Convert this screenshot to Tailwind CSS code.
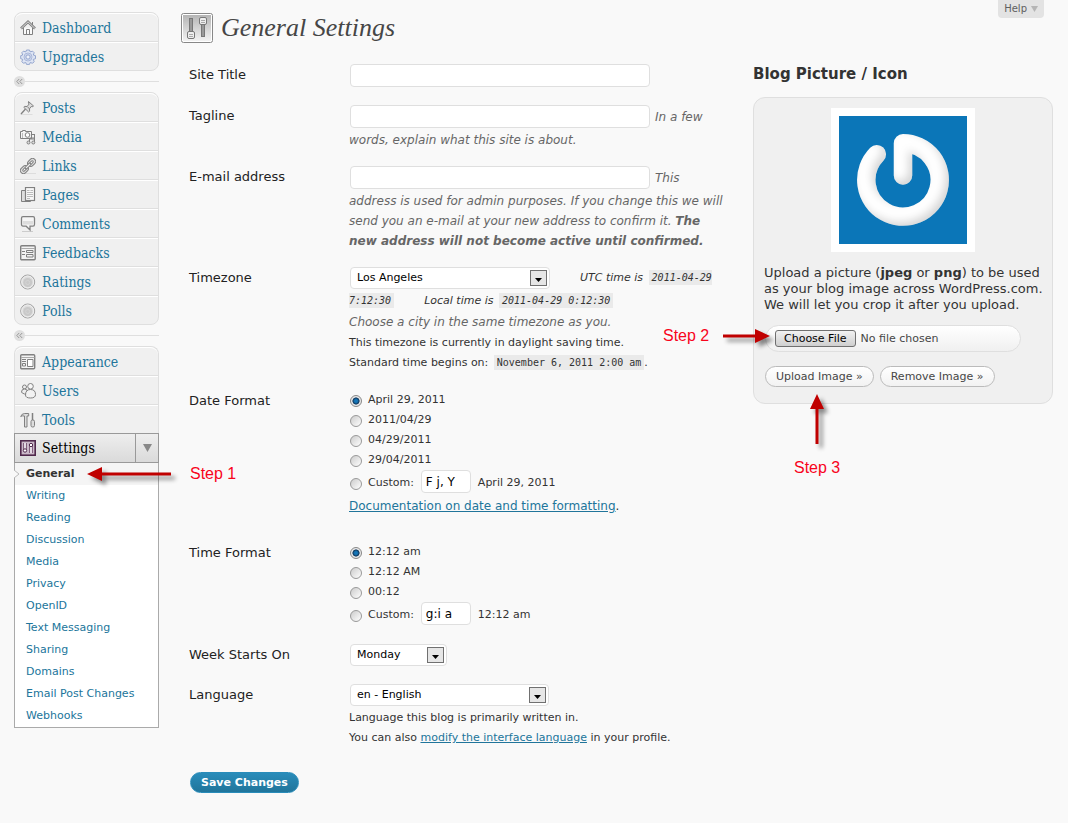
<!DOCTYPE html>
<html lang="en">

<head>
    <meta charset="UTF-8">
    <meta name="viewport" content="width=device-width, initial-scale=1.0">
    <title>General Settings</title>
    <script src="https://cdn.jsdelivr.net/npm/@tailwindcss/browser@4"></script>
</head>

<body class="flex min-h-screen items-start bg-[#f9f9f9] pl-[14px] pr-[15px] font-['DejaVu_Sans',sans-serif] text-[12px] leading-5 text-[#333]">

    <!-- Sidebar -->
    <nav class="w-[145px] shrink-0 pt-3 font-['DejaVu_Serif_Condensed','DejaVu_Serif',serif] text-[14px] text-[#21759b]">
        <ul class="rounded-lg border border-[#dfdfdf] bg-[#f0f0f0]">
            <li class="h-[29px] rounded-t-lg border-t border-b border-t-white border-b-[#dfdfdf]">
                <a href="#" class="flex h-full items-center gap-[6px] pl-[5px]">
                    <svg class="size-4" viewBox="0 0 16 16" fill="none" stroke="#808080"><path d="M3.500 8v6.500h9V8" fill="#fafafa"/><path d="M12.500 2v3"/><path d="M1 8.500L8 1.800l7 6.700" stroke-width="2.600"/><path d="M1.200 8.300L8 1.800l6.800 6.500" stroke="#e4e4e4" stroke-width=".9"/><path d="M6.500 14.500v-5h3v5"/></svg>
                    Dashboard</a>
            </li>
            <li class="h-[28px] border-t border-t-white">
                <a href="#" class="flex h-full items-center gap-[6px] pl-[5px]">
                    <svg class="size-4" viewBox="0 0 16 16" fill="none" stroke="#8c9fcb"><path d="M6.500 1h3l.6 1.800 2.600-.6 1.500 1.500-.9 2.300 2.200.7v3l-2.200.7.9 2.300-1.500 1.500-2.600-.6-.6 1.800h-3l-.6-1.800-2.600.6-1.500-1.500.9-2.300L.7 9.700v-3L2.700 6l-.9-2.300 1.500-1.500 2.600.6z" fill="#dde4f3" stroke-width=".9"/><circle cx="8" cy="8" r="4" stroke="#a9b7da"/><rect x="6" y="6" width="4" height="4" rx="1" fill="#eef1f9"/></svg>
                    Upgrades</a>
            </li>
        </ul>

        <div class="flex h-[21px] items-center">
            <svg class="size-[11px]" viewBox="0 0 11 11" fill="none"><circle cx="5.500" cy="5.500" r="5.500" fill="#dfdfdf"/><path d="M5.200 3L2.800 5.500 5.200 8M8.200 3L5.800 5.500 8.200 8" stroke="#999"/></svg>
            <span class="h-px flex-1 bg-[#dfdfdf]"></span>
        </div>

        <ul class="rounded-lg border border-[#dfdfdf] bg-[#f0f0f0]">
            <li class="h-[29px] rounded-t-lg border-t border-b border-t-white border-b-[#dfdfdf]">
                <a href="#" class="flex h-full items-center gap-[6px] pl-[5px]">
                    <svg class="size-4" viewBox="0 0 16 16" fill="none" stroke="#808080"><path d="M.5 14.500h12" stroke="#ddd"/><path d="M1 14l4.500-5" stroke-width="1.300"/><path d="M8.500 1.500l5 4.500-1.300.8-1-.3-1.700 2.300.1 2.400-1 .8-4.800-4.700.8-.9 2.500.1L9.200 4l-.8-1z" fill="#dcdcdc"/><path d="M7.500 7l2 1.700"/></svg>
                    Posts</a>
            </li>
            <li class="h-[29px] border-t border-b border-t-white border-b-[#dfdfdf]">
                <a href="#" class="flex h-full items-center gap-[6px] pl-[5px]">
                    <svg class="size-4" viewBox="0 0 16 16" fill="none" stroke="#808080"><path d="M.5 2.500h2v-1h3v1h6v7H.5z" fill="#f4f4f4"/><circle cx="7.500" cy="6" r="2.300" fill="#fff"/><path d="M2.500 4v5" stroke="#bbb"/><path d="M9.500 13.500V9h5v-3.500M14.500 5v8.500M12 5.500h2.500M9.500 10h5"/><circle cx="8.500" cy="13.500" r="1.500" fill="#ddd"/><circle cx="13.300" cy="13.500" r="1.500" fill="#ddd"/></svg>
                    Media</a>
            </li>
            <li class="h-[29px] border-t border-b border-t-white border-b-[#dfdfdf]">
                <a href="#" class="flex h-full items-center gap-[6px] pl-[5px]">
                    <svg class="size-4" viewBox="0 0 16 16" fill="none" stroke="#808080"><path d="M5 15.500h11" stroke="#ddd"/><g transform="rotate(-45 8 8)"><rect x="-1.500" y="4.900" width="8.700" height="6.200" rx="3.100" fill="#ddd"/><rect x="1" y="7" width="4" height="2" rx="1" fill="#fff"/><rect x="8.800" y="4.900" width="8.700" height="6.200" rx="3.100" fill="#ddd"/><rect x="11" y="7" width="4" height="2" rx="1" fill="#fff"/><rect x="4.500" y="6.900" width="7" height="2.200" rx="1" fill="#eee"/></g></svg>
                    Links</a>
            </li>
            <li class="h-[29px] border-t border-b border-t-white border-b-[#dfdfdf]">
                <a href="#" class="flex h-full items-center gap-[6px] pl-[5px]">
                    <svg class="size-4" viewBox="0 0 16 16" fill="none" stroke="#808080"><path d="M5 3.500H1.500v11h9V13" fill="#ddd"/><rect x="5.500" y=".5" width="9" height="13" fill="#f8f8f8" stroke-width="1.200"/><path d="M7 3.500h2.500M10.500 3.500h2.500M7 5.500h6M7 7.500h6M7 9.500h6M7 11.500h3" stroke="#bbb"/></svg>
                    Pages</a>
            </li>
            <li class="h-[29px] border-t border-b border-t-white border-b-[#dfdfdf]">
                <a href="#" class="flex h-full items-center gap-[6px] pl-[5px]">
                    <svg class="size-4" viewBox="0 0 16 16" fill="none" stroke="#808080"><path d="M2 15.500h11" stroke="#ccc"/><path d="M3 .7h10q1.500 0 1.500 1.500v6q0 2-1.500 2h-3L10 14l-3.800-3.800H3q-1.500 0-1.500-2v-6Q1.500.7 3 .7z" fill="#f6f6f6" stroke-width="1.300"/><path d="M3 5h10v3.500H3z" fill="#ddd" stroke="none"/></svg>
                    Comments</a>
            </li>
            <li class="h-[29px] border-t border-b border-t-white border-b-[#dfdfdf]">
                <a href="#" class="flex h-full items-center gap-[6px] pl-[5px]">
                    <svg class="size-4" viewBox="0 0 16 16" fill="none" stroke="#808080"><rect x=".7" y=".7" width="14.500" height="14" rx="1" fill="#f3f3f3" stroke-width="1.400"/><path d="M1 3.500h14" stroke="#aaa"/><path d="M2 6.500h3M2 9.500h3M6.500 5.500h6.500v2H6.500zM6.500 9.500h6.500v2.500H6.500z"/></svg>
                    Feedbacks</a>
            </li>
            <li class="h-[29px] border-t border-b border-t-white border-b-[#dfdfdf]">
                <a href="#" class="flex h-full items-center gap-[6px] pl-[5px]">
                    <svg class="size-4" viewBox="0 0 16 16" fill="none"><circle cx="7.700" cy="8" r="7" fill="#ddd" stroke="#a0a0a0"/><circle cx="7.700" cy="8" r="6" stroke="#eee"/><circle cx="7.700" cy="8.500" r="4.500" fill="#c9c9c9"/><circle cx="7.700" cy="8.500" r="2" stroke="#d4d4d4"/></svg>
                    Ratings</a>
            </li>
            <li class="h-[28px] border-t border-t-white">
                <a href="#" class="flex h-full items-center gap-[6px] pl-[5px]">
                    <svg class="size-4" viewBox="0 0 16 16" fill="none"><circle cx="7.700" cy="8" r="7" fill="#ddd" stroke="#a0a0a0"/><circle cx="7.700" cy="8" r="6" stroke="#eee"/><circle cx="7.700" cy="8.500" r="4.500" fill="#c9c9c9"/><circle cx="7.700" cy="8.500" r="2" stroke="#d4d4d4"/></svg>
                    Polls</a>
            </li>
        </ul>

        <div class="flex h-[21px] items-center">
            <svg class="size-[11px]" viewBox="0 0 11 11" fill="none"><circle cx="5.500" cy="5.500" r="5.500" fill="#dfdfdf"/><path d="M5.200 3L2.800 5.500 5.200 8M8.200 3L5.800 5.500 8.200 8" stroke="#999"/></svg>
            <span class="h-px flex-1 bg-[#dfdfdf]"></span>
        </div>

        <ul class="rounded-t-lg border border-b-0 border-[#dfdfdf] bg-[#f0f0f0]">
            <li class="h-[29px] rounded-t-lg border-t border-b border-t-white border-b-[#dfdfdf]">
                <a href="#" class="flex h-full items-center gap-[6px] pl-[5px]">
                    <svg class="size-4" viewBox="0 0 16 16" fill="none" stroke="#808080"><rect x=".7" y=".7" width="14" height="14" rx="1" fill="#f3f3f3" stroke-width="1.400"/><path d="M1 3.500h13.500" stroke="#aaa"/><path d="M2 5.500h4M2 7.500h4M2.500 9.500h3v2.500h-3z"/><path d="M7.500 5.500h5.500v7H7.500z" fill="#fff"/></svg>
                    Appearance</a>
            </li>
            <li class="h-[29px] border-t border-b border-t-white border-b-[#dfdfdf]">
                <a href="#" class="flex h-full items-center gap-[6px] pl-[5px]">
                    <svg class="size-4" viewBox="0 0 16 16" fill="none" stroke="#808080"><circle cx="4.500" cy="4" r="2" fill="#eee"/><path d="M1.500 9q0-3 3-3t3 3-3 2-3-2z" fill="#eee"/><circle cx="10.500" cy="3.300" r="2.800" fill="#f6f6f6"/><path d="M5.500 12q0-5.500 5-5.500t5 5q0 3.500-5 3.500t-5-3z" fill="#f2f2f2"/></svg>
                    Users</a>
            </li>
            <li class="h-[28px] border-t border-t-white">
                <a href="#" class="flex h-full items-center gap-[6px] pl-[5px]">
                    <svg class="size-4" viewBox="0 0 16 16" fill="none" stroke="#808080"><path d="M.7 4.500q1-3 4-3h4v2.500H7v11H4.500V4Q2 3.500.7 4.500z" fill="#ddd"/><path d="M12.500 1v7" stroke-width="1.500"/><rect x="11" y="8" width="3.500" height="7" rx="1.500" fill="#ddd"/></svg>
                    Tools</a>
            </li>
        </ul>
        <div class="flex h-[30px] border border-[#999] bg-linear-to-b from-[#eee] to-[#dadada] text-black">
            <a href="#" class="flex flex-1 items-center gap-[6px] pl-[5px]">
                <svg class="size-4" viewBox="0 0 16 16" fill="none"><rect x=".8" y=".8" width="14.400" height="14.400" fill="#cbb9c9" stroke="#50284c" stroke-width="1.600"/><path d="M3.500 3v7M6.500 3v7M9.500 6v7M12.500 6v7" stroke="#6d4869" stroke-width=".8"/><path d="M5 3v7M11 6v7" stroke="#f4eef3" stroke-width="1.200"/><circle cx="5" cy="10.500" r="1.700" fill="#fff" stroke="#50284c"/><circle cx="11" cy="5" r="1.700" fill="#fff" stroke="#50284c"/></svg>
                Settings</a>
            <button type="button" aria-label="Toggle settings menu" class="flex w-[23px] items-center justify-center border-l border-[#999]">
                <svg class="h-2 w-[9px]" viewBox="0 0 9 8" fill="#888"><path d="M0 0h9L4.500 8z"/></svg>
            </button>
        </div>
        <ul class="border border-t-0 border-[#aaa] bg-white font-['DejaVu_Sans',sans-serif] text-[11px] leading-[22px]">
            <li class="relative bg-[#f5f5f5] pl-[11px] font-bold text-[#333]"><a href="#">General</a>
                <svg class="absolute top-[6px] -left-px h-[10px] w-[6px]" viewBox="0 0 6 10" fill="#f9f9f9"><path d="M0 1l5 4-5 4" stroke="#bbb"/></svg>
                <div class="absolute top-0 left-[72px] flex items-center gap-[13px] whitespace-nowrap font-['Liberation_Sans',sans-serif] text-[16px] font-normal text-[#f8041c]">
                    <svg class="h-[18px] w-[90px] overflow-visible drop-shadow-[4px_4px_2px_rgb(0_0_0/0.45)]" viewBox="0 0 90 18" fill="#c00000"><path d="M0 9L15 2v5.500h69v3H15V16z"/></svg>
                    Step 1
                </div>
            </li>
            <li class="pl-[11px]"><a href="#">Writing</a></li>
            <li class="pl-[11px]"><a href="#">Reading</a></li>
            <li class="pl-[11px]"><a href="#">Discussion</a></li>
            <li class="pl-[11px]"><a href="#">Media</a></li>
            <li class="pl-[11px]"><a href="#">Privacy</a></li>
            <li class="pl-[11px]"><a href="#">OpenID</a></li>
            <li class="pl-[11px]"><a href="#">Text Messaging</a></li>
            <li class="pl-[11px]"><a href="#">Sharing</a></li>
            <li class="pl-[11px]"><a href="#">Domains</a></li>
            <li class="pl-[11px]"><a href="#">Email Post Changes</a></li>
            <li class="pl-[11px]"><a href="#">Webhooks</a></li>
        </ul>
    </nav>

    <main class="ml-[22px] min-w-0 flex-1">
        <header class="flex items-start justify-between">
            <div class="flex items-center gap-2 pt-3">
                <svg class="h-8 w-8" viewBox="0 0 32 32" fill="none">
                    <defs><linearGradient id="tile" x1="0" y1="0" x2="0" y2="1"><stop offset="0" stop-color="#b5b5b5"/><stop offset="1" stop-color="#f2f2f2"/></linearGradient></defs>
                    <rect x=".5" y="1.500" width="31" height="29" rx="2" fill="#fff" stroke="#888"/><rect x="2" y="3" width="28" height="26" fill="url(#tile)"/>
                    <rect x="8.500" y="6.500" width="3" height="14" fill="#999" stroke="#777"/>
                    <rect x="20.500" y="11.500" width="3" height="13" fill="#999" stroke="#777"/>
                    <rect x="6.500" y="19.500" width="7" height="7" rx="1.500" fill="#eee" stroke="#777"/>
                    <rect x="18.500" y="5.500" width="7" height="7" rx="1.500" fill="#eee" stroke="#777"/>
                    <path d="M8 22.500h4M8 24.500h4M20 8.500h4M20 10.500h4" stroke="#aaa"/>
                </svg>
                <h1 class="font-['Liberation_Serif',serif] text-[26px] leading-8 text-[#464646] italic">General Settings</h1>
            </div>
            <button type="button" class="mr-[9px] flex h-[18px] items-center gap-1 rounded-b-sm bg-[#e3e3e3] px-[6px] text-[10px] text-[#606060]">Help
                <svg class="h-[6px] w-[7px]" viewBox="0 0 7 6" fill="#b5b5b5"><path d="M0 0h7L3.500 6z"/></svg>
            </button>
        </header>

        <div class="flex items-start gap-6 pt-5 pl-2">
            <form class="min-w-0 flex-1">
                <div class="flex flex-col gap-4">
                    <div class="grid grid-cols-[160px_1fr]">
                        <label for="site-title" class="pt-px text-[13px] text-[#222]">Site Title</label>
                        <div class="flex h-[25px] items-start">
                            <input id="site-title" type="text" class="ml-px h-[23px] w-[300px] rounded border border-[#dfdfdf] bg-white px-1">
                        </div>
                    </div>

                    <div class="grid grid-cols-[160px_1fr] text-[#666]">
                        <label for="tagline" class="pt-px text-[13px] text-[#222]">Tagline</label>
                        <div class="italic">
                            <div class="mb-[2px] flex h-[23px] items-center gap-[5px]">
                                <input id="tagline" type="text" class="ml-px h-[23px] w-[300px] rounded border border-[#dfdfdf] bg-white px-1">
                                <span class="whitespace-nowrap">In a few</span>
                            </div>
                            <p>words, explain what this site is about.</p>
                        </div>
                    </div>

                    <div class="grid grid-cols-[160px_1fr] text-[#666]">
                        <label for="email" class="pt-px text-[13px] text-[#222]">E-mail address</label>
                        <div class="italic">
                            <div class="mb-[2px] flex h-[23px] items-center gap-[5px]">
                                <input id="email" type="email" class="ml-px h-[23px] w-[300px] rounded border border-[#dfdfdf] bg-white px-1">
                                <span class="whitespace-nowrap">This</span>
                            </div>
                            <p class="whitespace-nowrap">address is used for admin purposes. If you change this we will<br>send you an e-mail at your new address to confirm it. <b>The<br>new address will not become active until confirmed.</b></p>
                        </div>
                    </div>

                    <div class="grid grid-cols-[160px_1fr] pb-px text-[11px]">
                        <label for="timezone" class="pt-px text-[13px] text-[#222]">Timezone</label>
                        <div class="whitespace-nowrap">
                            <div class="mb-[2px] flex h-[22px] items-center gap-[30px]">
                                <div class="relative ml-px h-[22px] w-[200px]">
                                    <select id="timezone" class="h-full w-full appearance-none rounded border border-[#dfdfdf] bg-white pl-[6px] text-black">
                                        <option>Los Angeles</option>
                                    </select>
                                    <svg class="pointer-events-none absolute top-[3px] right-[3px] h-4 w-[17px]" viewBox="0 0 17 16"><rect x=".5" y=".5" width="16" height="15" fill="#e6e6e6" stroke="#707070"/><path d="M5 8h7l-3.500 4z"/></svg>
                                </div>
                                <span class="italic">UTC time is <code class="ml-[2px] bg-[#eaeaea] py-[2px] pl-[3px] font-['DejaVu_Sans_Mono',monospace] text-[10px]">2011-04-29</code></span>
                            </div>
                            <p class="italic"><code class="bg-[#eaeaea] py-[2px] pr-[3px] font-['DejaVu_Sans_Mono',monospace] text-[10px]">7:12:30</code><span class="ml-[30px]">Local time is <code class="ml-[2px] bg-[#eaeaea] px-[3px] py-[2px] font-['DejaVu_Sans_Mono',monospace] text-[10px]">2011-04-29 0:12:30</code></span></p>
                            <p class="mt-px text-[12px] text-[#666] italic">Choose a city in the same timezone as you.</p>
                            <p class="mt-px">This timezone is currently in daylight saving time.</p>
                            <p>Standard time begins on: <code class="ml-[2px] bg-[#eaeaea] px-[3px] py-[2px] font-['DejaVu_Sans_Mono',monospace] text-[10px]">November 6, 2011 2:00 am</code>.</p>
                        </div>
                    </div>

                    <div role="radiogroup" aria-labelledby="date-format" class="grid grid-cols-[160px_1fr] pb-[10px] text-[11px]">
                        <span id="date-format" class="pt-px text-[13px] text-[#222]">Date Format</span>
                        <div>
                            <label class="flex h-5 items-center gap-[6px]"><input type="radio" name="date" checked class="mt-[2px] ml-px size-3 appearance-none rounded-full border border-[#888] bg-[#e8e8e8] bg-radial from-[#1476b8] from-20% via-[#10385c] via-45% to-[#e8e8e8] to-55%">April 29, 2011</label>
                            <label class="flex h-5 items-center gap-[6px]"><input type="radio" name="date" class="mt-[2px] ml-px size-3 appearance-none rounded-full border border-[#999] bg-linear-to-br from-[#ccc] to-white">2011/04/29</label>
                            <label class="flex h-5 items-center gap-[6px]"><input type="radio" name="date" class="mt-[2px] ml-px size-3 appearance-none rounded-full border border-[#999] bg-linear-to-br from-[#ccc] to-white">04/29/2011</label>
                            <label class="flex h-5 items-center gap-[6px]"><input type="radio" name="date" class="mt-[2px] ml-px size-3 appearance-none rounded-full border border-[#999] bg-linear-to-br from-[#ccc] to-white">29/04/2011</label>
                            <div class="mb-px flex h-[25px] items-center gap-[7px]">
                                <label class="flex items-center gap-[6px]"><input type="radio" name="date" class="mt-[2px] ml-px size-3 appearance-none rounded-full border border-[#999] bg-linear-to-br from-[#ccc] to-white">Custom:</label>
                                <input type="text" aria-label="Custom date format" value="F j, Y" class="h-[23px] w-[50px] self-start rounded border border-[#dfdfdf] bg-white px-1 text-[12px] text-black">
                                <span>April 29, 2011</span>
                            </div>
                            <p class="text-[12px]"><a href="#" class="text-[#21759b] underline">Documentation on date and time formatting</a>.</p>
                        </div>
                    </div>

                    <div role="radiogroup" aria-labelledby="time-format" class="grid grid-cols-[160px_1fr] text-[11px]">
                        <span id="time-format" class="pt-px text-[13px] text-[#222]">Time Format</span>
                        <div>
                            <label class="flex h-5 items-center gap-[6px]"><input type="radio" name="time" checked class="mt-[2px] ml-px size-3 appearance-none rounded-full border border-[#888] bg-[#e8e8e8] bg-radial from-[#1476b8] from-20% via-[#10385c] via-45% to-[#e8e8e8] to-55%">12:12 am</label>
                            <label class="flex h-5 items-center gap-[6px]"><input type="radio" name="time" class="mt-[2px] ml-px size-3 appearance-none rounded-full border border-[#999] bg-linear-to-br from-[#ccc] to-white">12:12 AM</label>
                            <label class="flex h-5 items-center gap-[6px]"><input type="radio" name="time" class="mt-[2px] ml-px size-3 appearance-none rounded-full border border-[#999] bg-linear-to-br from-[#ccc] to-white">00:12</label>
                            <div class="mb-px flex h-[25px] items-center gap-[7px]">
                                <label class="flex items-center gap-[6px]"><input type="radio" name="time" class="mt-[2px] ml-px size-3 appearance-none rounded-full border border-[#999] bg-linear-to-br from-[#ccc] to-white">Custom:</label>
                                <input type="text" aria-label="Custom time format" value="g:i a" class="h-[23px] w-[50px] self-start rounded border border-[#dfdfdf] bg-white px-1 text-[12px] text-black">
                                <span>12:12 am</span>
                            </div>
                        </div>
                    </div>

                    <div class="grid grid-cols-[160px_1fr] pb-[2px] text-[11px]">
                        <label for="week" class="pt-px text-[13px] text-[#222]">Week Starts On</label>
                        <div class="relative ml-px h-[22px] w-[97px]">
                            <select id="week" class="h-full w-full appearance-none rounded border border-[#dfdfdf] bg-white pl-[6px] text-black">
                                <option>Monday</option>
                            </select>
                            <svg class="pointer-events-none absolute top-[3px] right-[3px] h-4 w-[17px]" viewBox="0 0 17 16"><rect x=".5" y=".5" width="16" height="15" fill="#e6e6e6" stroke="#707070"/><path d="M5 8h7l-3.500 4z"/></svg>
                        </div>
                    </div>

                    <div class="grid grid-cols-[160px_1fr] text-[11px]">
                        <label for="language" class="pt-px text-[13px] text-[#222]">Language</label>
                        <div>
                            <div class="relative mb-[2px] ml-px h-[22px] w-[199px]">
                                <select id="language" class="h-full w-full appearance-none rounded border border-[#dfdfdf] bg-white pl-[6px] text-black">
                                    <option>en - English</option>
                                </select>
                                <svg class="pointer-events-none absolute top-[3px] right-[3px] h-4 w-[17px]" viewBox="0 0 17 16"><rect x=".5" y=".5" width="16" height="15" fill="#e6e6e6" stroke="#707070"/><path d="M5 8h7l-3.500 4z"/></svg>
                            </div>
                            <p>Language this blog is primarily written in.</p>
                            <p>You can also <a href="#" class="text-[#21759b] underline">modify the interface language</a> in your profile.</p>
                        </div>
                    </div>
                </div>

                <button type="submit" class="mt-6 ml-px h-[21px] rounded-full border border-[#298cba] bg-linear-to-b from-[#298cba] to-[#21759b] px-[10px] text-[11px] leading-[19px] font-bold text-white">Save Changes</button>
            </form>

            <!-- Blog picture -->
            <aside class="w-[300px] shrink-0">
                <h2 class="text-[15px] font-bold">Blog Picture / Icon</h2>
                <div class="relative mt-[13px] rounded-xl border border-[#dfdfdf] bg-[#f0f0f0] px-[10px] pt-[10px] pb-4">
                    <svg class="mx-auto size-36 border-8 border-white bg-[#0b76b8]" viewBox="0 0 128 128" fill="none">
                        <defs>
                            <filter id="bevel" x="-20%" y="-20%" width="140%" height="140%">
                                <feGaussianBlur in="SourceAlpha" stdDeviation="4" result="b"/>
                                <feOffset in="b" dx="-4" dy="-4" result="o"/>
                                <feComposite in="SourceAlpha" in2="o" operator="out" result="edge"/>
                                <feFlood flood-color="#777" flood-opacity=".4"/>
                                <feComposite in2="edge" operator="in" result="shade"/>
                                <feMerge><feMergeNode in="SourceGraphic"/><feMergeNode in="shade"/></feMerge>
                            </filter>
                        </defs>
                        <g filter="url(#bevel)" stroke="#fff" stroke-width="18.500" stroke-linecap="round" stroke-linejoin="round">
                            <path d="M64 59.500V27.200a36.700 36.700 0 1 1-26.200 11"/>
                        </g>
                    </svg>
                    <p class="pt-[13px] text-[13px] leading-4 whitespace-nowrap">Upload a picture (<b>jpeg</b> or <b>png</b>) to be used<br>as your blog image across WordPress.com.<br>We will let you crop it after you upload.</p>
                    <input type="file" aria-label="Blog picture" class="mt-3 ml-px block h-[27px] w-64 rounded-full border border-[#dfdfdf] bg-linear-to-b from-white to-[#f0f0f0] pt-1 pl-[9px] text-[11px] leading-4 text-[#464646] file:mr-[5px] file:h-[17px] file:rounded-[3px] file:border file:border-solid file:border-[#707070] file:bg-linear-to-b file:from-[#f2f2f2] file:to-[#cfcfcf] file:px-2 file:text-[11px] file:leading-[14px] file:text-black">
                    <div class="mt-[14px] ml-px flex gap-[6px] text-[11px] text-[#464646]">
                        <button type="button" class="h-[21px] rounded-full border border-[#bbb] bg-linear-to-b from-white to-[#f2f2f2] px-[10px] leading-[19px]">Upload Image »</button>
                        <button type="button" class="h-[21px] rounded-full border border-[#bbb] bg-linear-to-b from-white to-[#f2f2f2] px-[10px] leading-[19px]">Remove Image »</button>
                    </div>

                    <div class="absolute top-[228px] -left-[91px] flex items-center gap-[14px] whitespace-nowrap font-['Liberation_Sans',sans-serif] text-[16px] text-[#f8041c]">
                        Step 2
                        <svg class="h-4 w-[47px] overflow-visible drop-shadow-[4px_4px_2px_rgb(0_0_0/0.45)]" viewBox="0 0 47 16" fill="#c00000"><path d="M47 8L32 1v5.500H0v3h32V15z"/></svg>
                    </div>
                    <div class="absolute top-[296px] left-10 flex flex-col items-center gap-[14px] whitespace-nowrap font-['Liberation_Sans',sans-serif] text-[16px] text-[#f8041c]">
                        <svg class="h-[50px] w-4 overflow-visible drop-shadow-[4px_4px_2px_rgb(0_0_0/0.45)]" viewBox="0 0 16 50" fill="#c00000"><path d="M8 0l7 15H9.500v35h-3V15H1z"/></svg>
                        Step 3
                    </div>
                </div>
            </aside>
        </div>
    </main>
</body>

</html>
